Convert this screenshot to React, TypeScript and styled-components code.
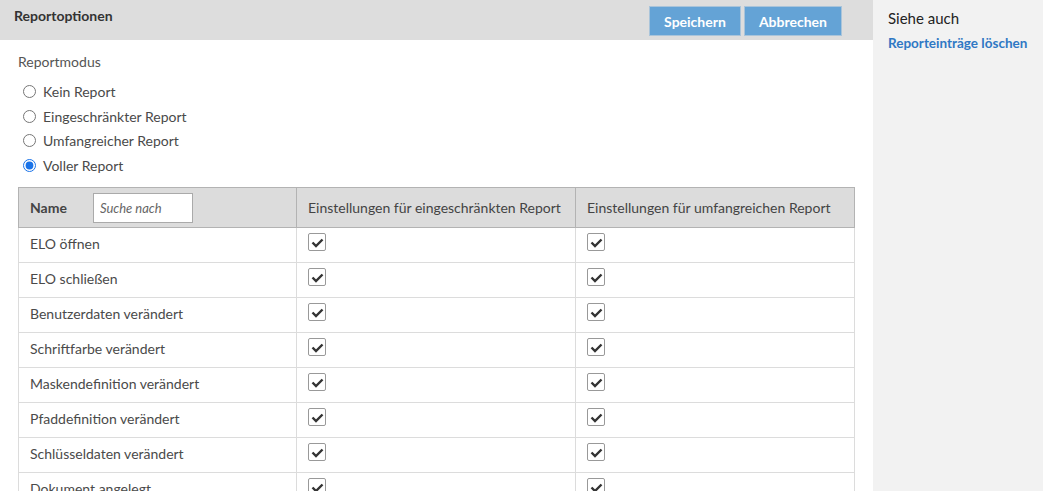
import React from 'react';
import styled, { createGlobalStyle } from 'styled-components';

const GlobalStyle = createGlobalStyle`
  html, body {
    margin: 0;
    padding: 0;
    background: #ffffff;
    font-family: 'Lato', 'Noto Sans', sans-serif;
    color: #4a4a4a;
  }
`;

const Page = styled.div`
  display: flex;
  width: 1043px;
  height: 491px;
  overflow: hidden;
`;

const Main = styled.div`
  width: 873px;
  flex-shrink: 0;
  display: flex;
  flex-direction: column;
`;

const HeaderBar = styled.div`
  height: 40px;
  flex-shrink: 0;
  background: #dddddd;
  display: flex;
  align-items: flex-start;
  justify-content: space-between;
  padding: 0 31px 0 14px;
  box-sizing: border-box;
`;

const Title = styled.div`
  font-size: 14px;
  font-weight: bold;
  color: #333333;
  margin-top: 7px;
`;

const Buttons = styled.div`
  display: flex;
  gap: 3px;
  margin-top: 6px;
`;

const Button = styled.button`
  height: 30px;
  padding: 0 14px;
  background: #64a3d6;
  border: 1px solid #a9c4da;
  color: #ffffff;
  font-family: inherit;
  font-size: 14px;
  font-weight: bold;
  cursor: pointer;
`;

const Content = styled.div`
  padding: 13px 18px 0 18px;
`;

const SectionLabel = styled.div`
  font-size: 14px;
  color: #555555;
  margin-bottom: 12px;
`;

const RadioList = styled.div`
  display: flex;
  flex-direction: column;
  gap: 5px;
  padding-left: 5px;
  margin-bottom: 12px;
`;

const RadioRow = styled.label`
  display: flex;
  align-items: center;
  gap: 7px;
  height: 19.5px;
  font-size: 14px;
  color: #4a4a4a;
`;

const Radio = styled.input`
  margin: 0;
  width: 13px;
  height: 13px;
  accent-color: #1a73e8;
`;

const Table = styled.table`
  width: 837px;
  border-collapse: collapse;
  font-size: 14px;
`;

const Th = styled.th<{ $w?: number }>`
  background: #dcdcdc;
  border: 1px solid #b3b3b3;
  height: 40px;
  padding: 0 11px;
  text-align: left;
  font-weight: normal;
  color: #444444;
  width: ${(p) => (p.$w ? `${p.$w}px` : 'auto')};
  box-sizing: border-box;
`;

const NameHead = styled.div`
  display: flex;
  align-items: center;
  gap: 26px;
  font-weight: bold;
`;

const Search = styled.input`
  width: 100px;
  height: 30px;
  box-sizing: border-box;
  border: 1px solid #aaaaaa;
  padding: 0 6px;
  font-family: inherit;
  font-size: 13px;
  font-style: italic;
  color: #555555;
  &::placeholder {
    color: #666666;
    font-style: italic;
  }
`;

const Row = styled.tr`
  height: 35px;
`;

const Td = styled.td`
  border: 1px solid #dcdcdc;
  padding: 0 11px 2px 11px;
  color: #4a4a4a;
  vertical-align: middle;
  line-height: 1;
`;

const CheckCell = styled(Td)`
  vertical-align: top;
  padding: 0 11px;
`;

const Box = styled.span`
  display: flex;
  align-items: center;
  justify-content: center;
  margin-top: 5px;
  width: 18px;
  height: 18px;
  box-sizing: border-box;
  border: 1px solid #999999;
  border-radius: 2px;
  background: #ffffff;
`;

const Sidebar = styled.div`
  flex: 1;
  background: #f2f2f2;
  padding: 9px 15px;
`;

const SideTitle = styled.div`
  font-size: 15px;
  color: #222222;
  margin-bottom: 5px;
`;

const SideLink = styled.a`
  font-size: 13.5px;
  font-weight: bold;
  color: #2f78c4;
  text-decoration: none;
`;

const Check = () => (
  <Box>
    <svg width="13" height="11" viewBox="0 0 13 11">
      <path d="M1.5 5.5 L5 9 L11.5 2.5" stroke="#333" strokeWidth="2.4" fill="none" />
    </svg>
  </Box>
);

const rows = [
  'ELO öffnen',
  'ELO schließen',
  'Benutzerdaten verändert',
  'Schriftfarbe verändert',
  'Maskendefinition verändert',
  'Pfaddefinition verändert',
  'Schlüsseldaten verändert',
  'Dokument angelegt',
  'Dokument gelöscht',
];

const modes = ['Kein Report', 'Eingeschränkter Report', 'Umfangreicher Report', 'Voller Report'];

export default function App() {
  return (
    <Page>
      <GlobalStyle />
      <Main>
        <HeaderBar>
          <Title>Reportoptionen</Title>
          <Buttons>
            <Button>Speichern</Button>
            <Button>Abbrechen</Button>
          </Buttons>
        </HeaderBar>
        <Content>
          <SectionLabel>Reportmodus</SectionLabel>
          <RadioList>
            {modes.map((m, i) => (
              <RadioRow key={m}>
                <Radio type="radio" name="mode" defaultChecked={i === 3} />
                {m}
              </RadioRow>
            ))}
          </RadioList>
          <Table>
            <thead>
              <tr>
                <Th $w={278}>
                  <NameHead>
                    Name
                    <Search placeholder="Suche nach" />
                  </NameHead>
                </Th>
                <Th $w={279}>Einstellungen für eingeschränkten Report</Th>
                <Th>Einstellungen für umfangreichen Report</Th>
              </tr>
            </thead>
            <tbody>
              {rows.map((r) => (
                <Row key={r}>
                  <Td>{r}</Td>
                  <CheckCell>
                    <Check />
                  </CheckCell>
                  <CheckCell>
                    <Check />
                  </CheckCell>
                </Row>
              ))}
            </tbody>
          </Table>
        </Content>
      </Main>
      <Sidebar>
        <SideTitle>Siehe auch</SideTitle>
        <SideLink href="#">Reporteinträge löschen</SideLink>
      </Sidebar>
    </Page>
  );
}
